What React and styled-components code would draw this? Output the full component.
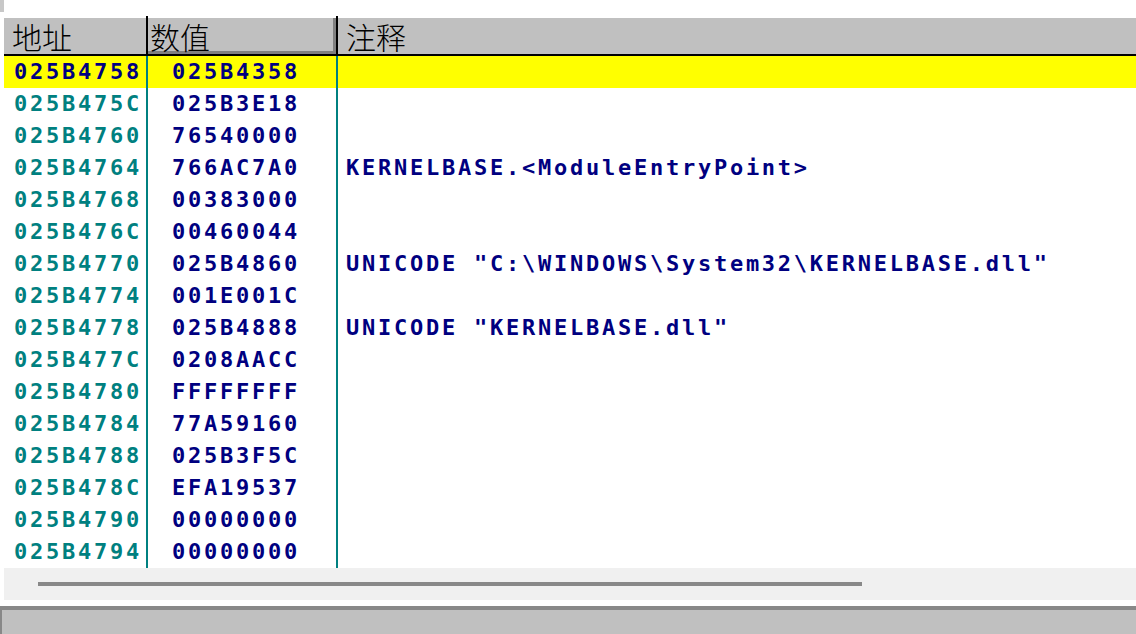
import React from "react";
import styled, { createGlobalStyle } from "styled-components";

const GlobalStyle = createGlobalStyle`
  html, body { margin: 0; padding: 0; background: #ffffff; overflow: hidden; }
  * { box-sizing: border-box; }
`;

const Page = styled.div`
  width: 1136px;
  height: 634px;
  display: flex;
  flex-direction: column;
  background: #ffffff;
`;

const TopStrip = styled.div`
  height: 18px;
  display: flex;
  align-items: flex-start;
`;

const Tab = styled.div`
  width: 4px;
  height: 12px;
  background: #c8c8c8;
`;

const Pane = styled.div`
  margin-left: 4px;
  display: flex;
  flex-direction: column;
`;

const cols = "144px 190px 1fr";

const HeaderRow = styled.div`
  display: grid;
  grid-template-columns: ${cols};
  height: 38px;
  background: #c0c0c0;
  border-bottom: 2px solid #000000;
`;

const HeaderCell = styled.div`
  position: relative;
  height: 36px;
  display: flex;
  align-items: center;
  padding-left: ${(p) => p.$pad}px;
  font-family: "Noto Sans CJK SC", "Noto Sans", sans-serif;
  font-size: 30px;
  font-weight: 300;
  line-height: 1;
  color: #000000;
  border-right: ${(p) => (p.$last ? "none" : "2px solid #000000")};
  box-shadow: ${(p) => (p.$pressed ? "inset -3px -3px 0 #808080" : "none")};
  white-space: nowrap;
  &::after {
    content: "";
    display: ${(p) => (p.$last ? "none" : "block")};
    position: absolute;
    right: -2px;
    top: -2px;
    width: 2px;
    height: 2px;
    background: #000000;
  }
`;

const Body = styled.div`
  display: flex;
  flex-direction: column;
`;

const Row = styled.div`
  display: grid;
  grid-template-columns: ${cols};
  height: 32px;
  background: ${(p) => (p.$selected ? "#ffff00" : "#ffffff")};
`;

const Cell = styled.div`
  height: 32px;
  padding-left: ${(p) => p.$pad}px;
  font-family: "DejaVu Sans Mono", "Liberation Mono", monospace;
  font-weight: bold;
  font-size: 22px;
  letter-spacing: 2.75px;
  line-height: 32px;
  color: ${(p) => p.$color};
  border-right: ${(p) => (p.$divider ? "2px solid #008080" : "none")};
  white-space: nowrap;
`;

const ScrollBar = styled.div`
  height: 32px;
  background: #f0f0f0;
  display: flex;
  align-items: center;
  padding-left: 34px;
`;

const Thumb = styled.div`
  width: 824px;
  height: 4px;
  background: #888888;
`;

const Gap = styled.div`
  height: 6px;
`;

const StatusBar = styled.div`
  height: 28px;
  background: #c0c0c0;
  border-top: 4px solid #888888;
  border-left: 2px solid #888888;
`;

const rows = [
  ["025B4758", "025B4358", ""],
  ["025B475C", "025B3E18", ""],
  ["025B4760", "76540000", ""],
  ["025B4764", "766AC7A0", "KERNELBASE.<ModuleEntryPoint>"],
  ["025B4768", "00383000", ""],
  ["025B476C", "00460044", ""],
  ["025B4770", "025B4860", 'UNICODE "C:\\WINDOWS\\System32\\KERNELBASE.dll"'],
  ["025B4774", "001E001C", ""],
  ["025B4778", "025B4888", 'UNICODE "KERNELBASE.dll"'],
  ["025B477C", "0208AACC", ""],
  ["025B4780", "FFFFFFFF", ""],
  ["025B4784", "77A59160", ""],
  ["025B4788", "025B3F5C", ""],
  ["025B478C", "EFA19537", ""],
  ["025B4790", "00000000", ""],
  ["025B4794", "00000000", ""],
];

export default function App() {
  return (
    <>
      <GlobalStyle />
      <Page>
        <TopStrip>
          <Tab />
        </TopStrip>
        <Pane>
          <HeaderRow>
            <HeaderCell $pad={8}>地址</HeaderCell>
            <HeaderCell $pad={2} $pressed>数值</HeaderCell>
            <HeaderCell $pad={8} $last>注释</HeaderCell>
          </HeaderRow>
          <Body>
            {rows.map(([addr, val, note], i) => (
              <Row key={addr} $selected={i === 0}>
                <Cell $pad={10} $color={i === 0 ? "#000080" : "#008080"} $divider>
                  {addr}
                </Cell>
                <Cell $pad={24} $color="#000080" $divider>
                  {val}
                </Cell>
                <Cell $pad={8} $color="#000080">
                  {note}
                </Cell>
              </Row>
            ))}
          </Body>
          <ScrollBar>
            <Thumb />
          </ScrollBar>
        </Pane>
        <Gap />
        <StatusBar />
      </Page>
    </>
  );
}
